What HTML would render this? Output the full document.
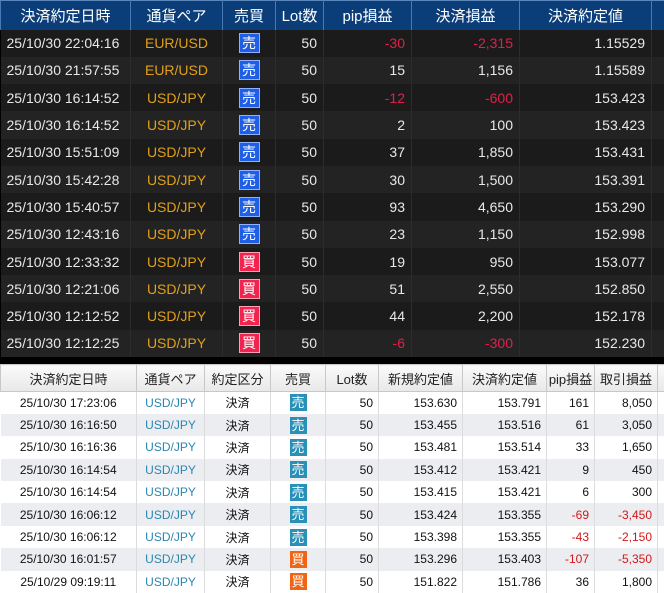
<!DOCTYPE html>
<html><head><meta charset="utf-8"><style>
*{margin:0;padding:0;box-sizing:border-box}
body{width:664px;height:593px;background:#000;overflow:hidden;font-family:"Liberation Sans","Noto Sans CJK JP",sans-serif;position:relative}
table{border-collapse:collapse;table-layout:fixed;position:absolute;left:0}
#t1{top:0;width:664px;color:#e8e8e8;font-size:14px}
#t1 th{height:29px;background:#0b3d78;color:#fff;font-weight:normal;font-size:15px;border-left:1px solid #4a78b0;border-right:1px solid #4a78b0;border-top:1px solid #5b86bb}
#t1 td{height:27.3px;border-right:1px solid #2c2c2c;padding:0 6px;white-space:nowrap}
#t1 tr:nth-child(even) td{background:#1b1b1b}
#t1 tr:nth-child(odd) td{background:#232323}
.r{text-align:right}.c{text-align:center}
.p{color:#e2a018}
.n{color:#e0204a}
.b{display:inline-block;width:21px;height:20px;line-height:18px;font-size:14px;text-align:center;color:#fff;vertical-align:middle}
.s{background:#1e5fe6;border:1px solid #8fb0ff}
.k{background:#f0244e;border:1px solid #ff9fb0}
#t2{top:364px;width:664px;color:#111;font-size:12px;background:#fff}
#t2 th{height:27px;background:linear-gradient(#fafafa,#e8e8e8);font-weight:normal;font-size:13px;border:1px solid #c8c8c8;color:#222}
#t2 td{height:22.4px;border-right:1px solid #dcdcdc;padding:0 5px;white-space:nowrap}
#t2 tr:nth-child(odd) td{background:#ecedf1}
.u{color:#2a86b0}
.n2{color:#d01818}
.b2{display:inline-block;width:17px;height:17px;line-height:17px;font-size:13px;text-align:center;color:#fff;vertical-align:middle}
.s2{background:#2a90b8}.k2{background:#f06414}
</style></head><body>
<table id="t1">
<colgroup><col style="width:130px"><col style="width:92px"><col style="width:53px"><col style="width:48px"><col style="width:88px"><col style="width:108px"><col style="width:132px"><col style="width:13px"></colgroup>
<tr><th>決済約定日時</th><th>通貨ペア</th><th>売買</th><th>Lot数</th><th>pip損益</th><th>決済損益</th><th>決済約定値</th><th></th></tr>
<tr><td>25/10/30 22:04:16</td><td class="c p">EUR/USD</td><td class="c"><span class="b s">売</span></td><td class="r">50</td><td class="r n">-30</td><td class="r n">-2,315</td><td class="r">1.15529</td><td></td></tr>
<tr><td>25/10/30 21:57:55</td><td class="c p">EUR/USD</td><td class="c"><span class="b s">売</span></td><td class="r">50</td><td class="r">15</td><td class="r">1,156</td><td class="r">1.15589</td><td></td></tr>
<tr><td>25/10/30 16:14:52</td><td class="c p">USD/JPY</td><td class="c"><span class="b s">売</span></td><td class="r">50</td><td class="r n">-12</td><td class="r n">-600</td><td class="r">153.423</td><td></td></tr>
<tr><td>25/10/30 16:14:52</td><td class="c p">USD/JPY</td><td class="c"><span class="b s">売</span></td><td class="r">50</td><td class="r">2</td><td class="r">100</td><td class="r">153.423</td><td></td></tr>
<tr><td>25/10/30 15:51:09</td><td class="c p">USD/JPY</td><td class="c"><span class="b s">売</span></td><td class="r">50</td><td class="r">37</td><td class="r">1,850</td><td class="r">153.431</td><td></td></tr>
<tr><td>25/10/30 15:42:28</td><td class="c p">USD/JPY</td><td class="c"><span class="b s">売</span></td><td class="r">50</td><td class="r">30</td><td class="r">1,500</td><td class="r">153.391</td><td></td></tr>
<tr><td>25/10/30 15:40:57</td><td class="c p">USD/JPY</td><td class="c"><span class="b s">売</span></td><td class="r">50</td><td class="r">93</td><td class="r">4,650</td><td class="r">153.290</td><td></td></tr>
<tr><td>25/10/30 12:43:16</td><td class="c p">USD/JPY</td><td class="c"><span class="b s">売</span></td><td class="r">50</td><td class="r">23</td><td class="r">1,150</td><td class="r">152.998</td><td></td></tr>
<tr><td>25/10/30 12:33:32</td><td class="c p">USD/JPY</td><td class="c"><span class="b k">買</span></td><td class="r">50</td><td class="r">19</td><td class="r">950</td><td class="r">153.077</td><td></td></tr>
<tr><td>25/10/30 12:21:06</td><td class="c p">USD/JPY</td><td class="c"><span class="b k">買</span></td><td class="r">50</td><td class="r">51</td><td class="r">2,550</td><td class="r">152.850</td><td></td></tr>
<tr><td>25/10/30 12:12:52</td><td class="c p">USD/JPY</td><td class="c"><span class="b k">買</span></td><td class="r">50</td><td class="r">44</td><td class="r">2,200</td><td class="r">152.178</td><td></td></tr>
<tr><td>25/10/30 12:12:25</td><td class="c p">USD/JPY</td><td class="c"><span class="b k">買</span></td><td class="r">50</td><td class="r n">-6</td><td class="r n">-300</td><td class="r">152.230</td><td></td></tr>
</table>
<table id="t2">
<colgroup><col style="width:136px"><col style="width:68px"><col style="width:66px"><col style="width:55px"><col style="width:53px"><col style="width:84px"><col style="width:84px"><col style="width:48px"><col style="width:63px"><col style="width:7px"></colgroup>
<tr><th>決済約定日時</th><th>通貨ペア</th><th>約定区分</th><th>売買</th><th>Lot数</th><th>新規約定値</th><th>決済約定値</th><th>pip損益</th><th>取引損益</th><th></th></tr>
<tr><td class="c">25/10/30 17:23:06</td><td class="c u">USD/JPY</td><td class="c">決済</td><td class="c"><span class="b2 s2">売</span></td><td class="r">50</td><td class="r">153.630</td><td class="r">153.791</td><td class="r">161</td><td class="r">8,050</td><td></td></tr>
<tr><td class="c">25/10/30 16:16:50</td><td class="c u">USD/JPY</td><td class="c">決済</td><td class="c"><span class="b2 s2">売</span></td><td class="r">50</td><td class="r">153.455</td><td class="r">153.516</td><td class="r">61</td><td class="r">3,050</td><td></td></tr>
<tr><td class="c">25/10/30 16:16:36</td><td class="c u">USD/JPY</td><td class="c">決済</td><td class="c"><span class="b2 s2">売</span></td><td class="r">50</td><td class="r">153.481</td><td class="r">153.514</td><td class="r">33</td><td class="r">1,650</td><td></td></tr>
<tr><td class="c">25/10/30 16:14:54</td><td class="c u">USD/JPY</td><td class="c">決済</td><td class="c"><span class="b2 s2">売</span></td><td class="r">50</td><td class="r">153.412</td><td class="r">153.421</td><td class="r">9</td><td class="r">450</td><td></td></tr>
<tr><td class="c">25/10/30 16:14:54</td><td class="c u">USD/JPY</td><td class="c">決済</td><td class="c"><span class="b2 s2">売</span></td><td class="r">50</td><td class="r">153.415</td><td class="r">153.421</td><td class="r">6</td><td class="r">300</td><td></td></tr>
<tr><td class="c">25/10/30 16:06:12</td><td class="c u">USD/JPY</td><td class="c">決済</td><td class="c"><span class="b2 s2">売</span></td><td class="r">50</td><td class="r">153.424</td><td class="r">153.355</td><td class="r n2">-69</td><td class="r n2">-3,450</td><td></td></tr>
<tr><td class="c">25/10/30 16:06:12</td><td class="c u">USD/JPY</td><td class="c">決済</td><td class="c"><span class="b2 s2">売</span></td><td class="r">50</td><td class="r">153.398</td><td class="r">153.355</td><td class="r n2">-43</td><td class="r n2">-2,150</td><td></td></tr>
<tr><td class="c">25/10/30 16:01:57</td><td class="c u">USD/JPY</td><td class="c">決済</td><td class="c"><span class="b2 k2">買</span></td><td class="r">50</td><td class="r">153.296</td><td class="r">153.403</td><td class="r n2">-107</td><td class="r n2">-5,350</td><td></td></tr>
<tr><td class="c">25/10/29 09:19:11</td><td class="c u">USD/JPY</td><td class="c">決済</td><td class="c"><span class="b2 k2">買</span></td><td class="r">50</td><td class="r">151.822</td><td class="r">151.786</td><td class="r">36</td><td class="r">1,800</td><td></td></tr>
</table>
</body></html>
